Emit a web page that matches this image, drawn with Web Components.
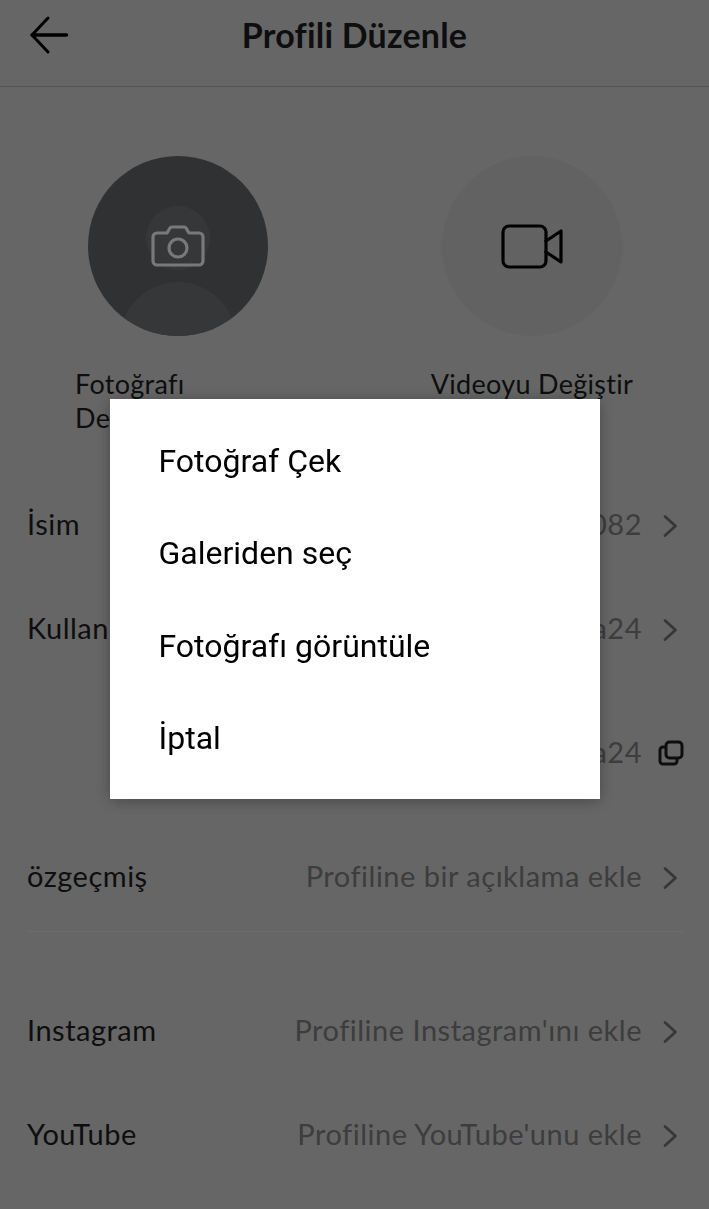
<!DOCTYPE html>
<html lang="tr">
<head>
<meta charset="utf-8">
<title>Profili Düzenle</title>
<style>
  html, body { margin: 0; height: 100%; background: #cdcdcd; }
  body { font-family: 'Lato', 'Liberation Sans', sans-serif; color: #1c1c20; overflow: hidden; }
</style>
</head>
<body>
<edit-profile></edit-profile>
<action-dialog>
  <action-item>Fotoğraf Çek</action-item>
  <action-item>Galeriden seç</action-item>
  <action-item>Fotoğrafı görüntüle</action-item>
  <action-item>İptal</action-item>
</action-dialog>

<script>
const chevron = `<svg width="16" height="24" viewBox="0 0 16 24" fill="none" stroke="#6e6e70" stroke-width="2.8" stroke-linecap="round" stroke-linejoin="round"><path d="M3 2.5l10.5 9.5L3 21.5"/></svg>`;
const copyIcon = `<svg width="26" height="26" viewBox="0 0 26 26" fill="none" stroke="#1c1c20" stroke-width="3" stroke-linejoin="round"><rect x="8" y="2" width="16" height="16" rx="3.5"/><path d="M8 7H5a3 3 0 0 0-3 3v11a3 3 0 0 0 3 3h11a3 3 0 0 0 3-3v-3"/></svg>`;

class TopBar extends HTMLElement {
  constructor() {
    super();
    this.attachShadow({ mode: 'open' });
    this.shadowRoot.innerHTML = `
      <style>
        :host { display: grid; grid-template-columns: 1fr auto 1fr; align-items: center; height: 70px; padding-bottom: 16px; border-bottom: 1px solid #a9a9a9; }
        svg { margin-left: 20px; display: block; }
        h1 { margin: 0; font-size: 34px; font-weight: 700; line-height: 40px; letter-spacing: .2px; }
      </style>
      <svg width="50" height="40" viewBox="0 0 50 40" fill="none" stroke="#000" stroke-linecap="round" stroke-linejoin="round"><path d="M28 3L12 20l16 17" stroke-width="3"/><path d="M12 20h34.5" stroke-width="3.4"/></svg>
      <h1><slot></slot></h1>
      <span></span>
    `;
  }
}

class MediaPick extends HTMLElement {
  constructor() {
    super();
    this.attachShadow({ mode: 'open' });
    this.shadowRoot.innerHTML = `
      <style>
        :host { display: flex; flex-direction: column; align-items: center; }
        .disc { width: 180px; height: 180px; border-radius: 50%; background: #c5c5c5; position: relative; overflow: hidden; display: flex; align-items: center; justify-content: center; }
        :host([photo]) .disc { background: #606264; }
        .head, .body { display: none; position: absolute; background: #6c6e70; border-radius: 50%; }
        :host([photo]) .head, :host([photo]) .body { display: block; }
        .head { width: 64px; height: 64px; left: 58px; top: 50px; }
        .body { width: 116px; height: 116px; left: 32px; top: 126px; }
        ::slotted(svg) { position: relative; }
        p { margin: 31px 0 0; width: 206px; font-size: 27px; line-height: 34px; letter-spacing: .3px; text-align: center; }
        :host([photo]) p { text-align: left; }
      </style>
      <div class="disc"><i class="head"></i><i class="body"></i><slot name="icon"></slot></div>
      <p><slot></slot></p>
    `;
  }
}

class ProfileRow extends HTMLElement {
  constructor() {
    super();
    this.attachShadow({ mode: 'open' });
    this.shadowRoot.innerHTML = `
      <style>
        :host { display: flex; align-items: center; justify-content: space-between; height: 104px; padding: 0 31px 0 27px; font-size: 29px; letter-spacing: .5px; }
        .val { display: flex; align-items: center; gap: 20px; color: #7a7a7c; }
        ::slotted([slot=end]) { display: block; margin-top: 6px; }
      </style>
      <span><slot name="label"></slot></span>
      <span class="val"><slot></slot><slot name="end"></slot></span>
    `;
  }
}

class EditProfile extends HTMLElement {
  constructor() {
    super();
    this.attachShadow({ mode: 'open' });
    this.shadowRoot.innerHTML = `
      <style>
        :host { display: block; }
        .media { display: grid; grid-template-columns: 356px 352px; height: 315px; padding-top: 69px; }
        .gap { height: 20px; }
        hr { margin: 4px 26px 45px 27px; border: 0; height: 1px; background: #d8d8d8; }
      </style>
      <top-bar>Profili Düzenle</top-bar>
      <div class="media">
        <media-pick photo>
          <svg slot="icon" width="54" height="42" viewBox="0 0 54 42" fill="none" stroke="#f2f2f2" stroke-width="3.2" stroke-linejoin="round"><path d="M6 8h10l3-5a2 2 0 0 1 1.7-1h12.6a2 2 0 0 1 1.7 1l3 5h10a4 4 0 0 1 4 4v24a4 4 0 0 1-4 4H6a4 4 0 0 1-4-4V12a4 4 0 0 1 4-4z"/><circle cx="27" cy="23" r="9"/></svg>
          Fotoğrafı Değiştir
        </media-pick>
        <media-pick>
          <svg slot="icon" width="62" height="45" viewBox="0 0 62 45" fill="none" stroke="#000" stroke-width="3.2" stroke-linejoin="round" stroke-linecap="round"><rect x="2" y="2" width="43" height="41" rx="6"/><path d="M45 17l15-10v31L45 28"/></svg>
          Videoyu Değiştir
        </media-pick>
      </div>
      <profile-row><span slot="label">İsim</span>082<span slot="end">${chevron}</span></profile-row>
      <profile-row><span slot="label">Kullanıcı adı</span>a24<span slot="end">${chevron}</span></profile-row>
      <div class="gap"></div>
      <profile-row>a24<span slot="end" style="margin:7px -6px 0 -4px">${copyIcon}</span></profile-row>
      <div class="gap"></div>
      <profile-row><span slot="label">özgeçmiş</span>Profiline bir açıklama ekle<span slot="end">${chevron}</span></profile-row>
      <hr>
      <profile-row><span slot="label">Instagram</span>Profiline Instagram'ını ekle<span slot="end">${chevron}</span></profile-row>
      <profile-row><span slot="label">YouTube</span>Profiline YouTube'unu ekle<span slot="end">${chevron}</span></profile-row>
    `;
  }
}

class ActionDialog extends HTMLElement {
  constructor() {
    super();
    this.attachShadow({ mode: 'open' });
    this.shadowRoot.innerHTML = `
      <style>
        :host { position: fixed; inset: 0; display: flex; align-items: flex-start; justify-content: center; padding-top: 399px; box-sizing: border-box; background: rgba(0,0,0,.5); }
        .box { width: 490px; height: 400px; box-sizing: border-box; padding: 16px 0 15px; background: #fff; box-shadow: 0 2px 14px rgba(0,0,0,.3); display: flex; flex-direction: column; }
      </style>
      <div class="box"><slot></slot></div>
    `;
  }
}

class ActionItem extends HTMLElement {
  constructor() {
    super();
    this.attachShadow({ mode: 'open' });
    this.shadowRoot.innerHTML = `
      <style>
        :host { display: flex; align-items: center; flex: 1; padding-left: 49px; font: 400 32px 'Roboto', sans-serif; color: #000; }
      </style>
      <slot></slot>
    `;
  }
}

customElements.define('top-bar', TopBar);
customElements.define('media-pick', MediaPick);
customElements.define('profile-row', ProfileRow);
customElements.define('edit-profile', EditProfile);
customElements.define('action-dialog', ActionDialog);
customElements.define('action-item', ActionItem);
</script>
</body>
</html>
